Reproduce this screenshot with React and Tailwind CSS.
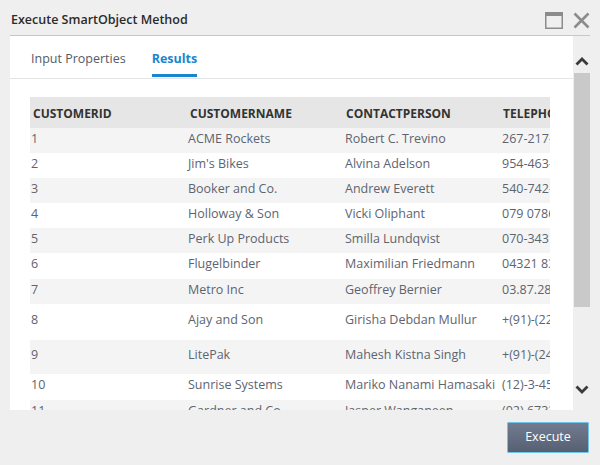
import React from 'react';

const rows = [
  { id: '1', name: 'ACME Rockets', contact: 'Robert C. Trevino', phone: '267-217-5555', h: 'h-[25px]' },
  { id: '2', name: "Jim's Bikes", contact: 'Alvina Adelson', phone: '954-463-1234', h: 'h-[25px]' },
  { id: '3', name: 'Booker and Co.', contact: 'Andrew Everett', phone: '540-742-1890', h: 'h-[25px]' },
  { id: '4', name: 'Holloway & Son', contact: 'Vicki Oliphant', phone: '079 0786 4321', h: 'h-[25px]' },
  { id: '5', name: 'Perk Up Products', contact: 'Smilla Lundqvist', phone: '070-343 22 11', h: 'h-[25px]' },
  { id: '6', name: 'Flugelbinder', contact: 'Maximilian Friedmann', phone: '04321 83 22 19', h: 'h-[26px]' },
  { id: '7', name: 'Metro Inc', contact: 'Geoffrey Bernier', phone: '03.87.28.12.34', h: 'h-[25px]' },
  { id: '8', name: 'Ajay and Son', contact: 'Girisha Debdan Mullur', phone: '+(91)-(22)-2345-6789', h: 'h-[36px]' },
  { id: '9', name: 'LitePak', contact: 'Mahesh Kistna Singh', phone: '+(91)-(24)-2876-1122', h: 'h-[34px]' },
  { id: '10', name: 'Sunrise Systems', contact: 'Mariko Nanami Hamasaki', phone: '(12)-3-4567-8901', h: 'h-[26px]' },
  { id: '11', name: 'Gardner and Co', contact: 'Jasper Wanganeen', phone: '(02) 6732 1188', h: 'h-[26px]' },
];

const cols = ['CUSTOMERID', 'CUSTOMERNAME', 'CONTACTPERSON', 'TELEPHONE'];

const Chevron = ({ down }) => (
  <svg width="14" height="9" viewBox="0 0 14 9">
    <path
      d={down ? 'M1.5 1.5 L7 7 L12.5 1.5' : 'M1.5 7.5 L7 2 L12.5 7.5'}
      fill="none"
      stroke="#3a3a3a"
      strokeWidth="2.8"
    />
  </svg>
);

export default function App() {
  return (
    <div className="w-[600px] h-[465px] bg-[#efefef] flex flex-col font-['Open_Sans',sans-serif] overflow-hidden">
      {/* title bar */}
      <div className="mx-[10px] h-[36px] shrink-0 flex items-center justify-between border-b border-[#c3c8cd] pl-[1px] pt-[6px]">
        <span className="text-[12.5px] font-semibold text-[#2b2b2b]">Execute SmartObject Method</span>
        <div className="flex items-center gap-[10px]">
          <svg width="18" height="17" viewBox="0 0 18 17">
            <rect x="0.75" y="0.75" width="16.5" height="15.5" fill="none" stroke="#8c8c8c" strokeWidth="1.5" />
            <rect x="0" y="0" width="18" height="4" fill="#8c8c8c" />
          </svg>
          <svg width="17" height="17" viewBox="0 0 17 17">
            <path d="M1.5 1.5 L15.5 15.5 M15.5 1.5 L1.5 15.5" stroke="#8c8c8c" strokeWidth="2.6" />
          </svg>
        </div>
      </div>

      {/* body */}
      <div className="mx-[10px] h-[374px] shrink-0 flex">
        <div className="flex-1 bg-white flex flex-col overflow-hidden">
          <div className="h-[43px] shrink-0 border-b border-[#e4e4e4] flex items-end pl-[21px] gap-[26px] text-[12.5px]">
            <div className="h-full flex items-center pt-[4px] text-[#555b66]">Input Properties</div>
            <div className="h-full flex flex-col justify-center pt-[4px] relative">
              <span className="font-bold text-[#1a86cf]">Results</span>
              <div className="absolute left-0 right-0 bottom-[1px] h-[3px] bg-[#1a86cf]" />
            </div>
          </div>
          <div className="pt-[18px] pl-[20px] pr-[23px] overflow-hidden">
            <div className="overflow-hidden">
              <table className="w-[640px] border-collapse table-fixed text-left">
                <colgroup>
                  <col className="w-[157px]" />
                  <col className="w-[156px]" />
                  <col className="w-[157px]" />
                  <col className="w-[170px]" />
                </colgroup>
                <thead>
                  <tr className="h-[31px] bg-[#e6e6e6]">
                    {cols.map((c) => (
                      <th key={c} className="pl-[3px] pt-[2px] text-[12px] font-bold text-[#333] whitespace-nowrap">{c}</th>
                    ))}
                  </tr>
                </thead>
                <tbody>
                  {rows.map((r, i) => (
                    <tr key={r.id} className={`${r.h} ${i % 2 === 0 ? 'bg-[#f4f4f4]' : 'bg-white'} text-[12.5px] text-[#5d6470]`}>
                      <td className="pl-[1px] pb-[3px] whitespace-nowrap">{r.id}</td>
                      <td className="pl-[1px] pb-[3px] whitespace-nowrap">{r.name}</td>
                      <td className="pl-[2px] pb-[3px] whitespace-nowrap">{r.contact}</td>
                      <td className="pl-[2px] pb-[3px] whitespace-nowrap">{r.phone}</td>
                    </tr>
                  ))}
                </tbody>
              </table>
            </div>
          </div>
        </div>
        {/* scrollbar */}
        <div className="w-[17px] shrink-0 flex flex-col items-center">
          <div className="h-[37px] flex items-end justify-center pb-[7px]">
            <Chevron />
          </div>
          <div className="h-[234px] w-[16px] bg-[#c9c9c9]" />
          <div className="flex-1" />
          <div className="h-[28px] flex items-start justify-center pt-[3px]">
            <Chevron down />
          </div>
        </div>
      </div>

      {/* footer */}
      <div className="flex justify-end pr-[11px] pt-[12px]">
        <button className="w-[82px] h-[31px] border border-[#6fc4ea] bg-gradient-to-b from-[#727b8f] to-[#566073] text-white text-[12.5px] rounded-[1px]">
          Execute
        </button>
      </div>
    </div>
  );
}
